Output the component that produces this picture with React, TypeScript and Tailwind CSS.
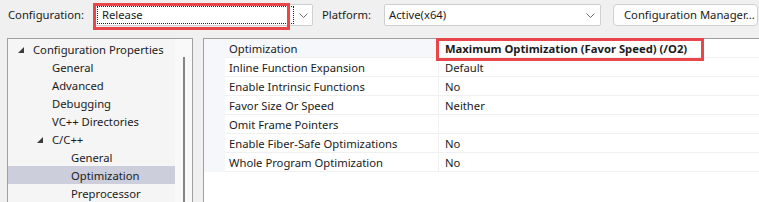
import React from "react";

const FONT = "font-['Segoe_UI','Noto_Sans',sans-serif]";

function Chevron() {
	return (
		<svg width="9" height="5" viewBox="0 0 9 5" className="shrink-0">
			<polyline
				points="0.5,0.5 4.5,4.5 8.5,0.5"
				fill="none"
				stroke="#6b6b6b"
				strokeWidth="1"
			/>
		</svg>
	);
}

function Expander() {
	return (
		<svg width="6" height="6" viewBox="0 0 6 6" className="shrink-0">
			<polygon points="6,0 6,6 0,6" fill="#3c3c3c" />
		</svg>
	);
}

const treeItems = [
	{ label: "Configuration Properties", level: 0, expanded: true },
	{ label: "General", level: 1 },
	{ label: "Advanced", level: 1 },
	{ label: "Debugging", level: 1 },
	{ label: "VC++ Directories", level: 1 },
	{ label: "C/C++", level: 1, expanded: true },
	{ label: "General", level: 2 },
	{ label: "Optimization", level: 2, selected: true },
	{ label: "Preprocessor", level: 2 },
];

const properties = [
	{ name: "Optimization", value: "Maximum Optimization (Favor Speed) (/O2)", bold: true },
	{ name: "Inline Function Expansion", value: "Default" },
	{ name: "Enable Intrinsic Functions", value: "No" },
	{ name: "Favor Size Or Speed", value: "Neither" },
	{ name: "Omit Frame Pointers", value: "" },
	{ name: "Enable Fiber-Safe Optimizations", value: "No" },
	{ name: "Whole Program Optimization", value: "No" },
];

export default function App() {
	return (
		<div
			className={`relative w-[759px] h-[202px] overflow-hidden bg-[#f0f0f0] text-[11.25px] text-[#1b1b1b] ${FONT}`}
		>
			{/* ツールバー */}
			<div className="flex items-start h-[38px] pt-[4px] pl-[8px]">
				<div className="flex items-center h-[22px] w-[87px] pt-[1px]">Configuration:</div>
				<div className="flex items-center h-[22px] w-[218px] bg-white border border-[#cfcfcf] rounded-[2px] pl-[1px] pr-[4px]">
					<div className="flex items-center h-[18px] w-[197px] border border-dotted border-[#222] pl-[4px] pt-[1px]">
						Release
					</div>
					<div className="flex-1 flex justify-end">
						<Chevron />
					</div>
				</div>
				<div className="flex items-center h-[22px] ml-[9px] w-[62px] pt-[1px]">Platform:</div>
				<div className="flex items-center justify-between h-[22px] w-[217px] bg-white border border-[#cfcfcf] rounded-[2px] pl-[4px] pr-[5px]">
					<span className="pt-[1px]">Active(x64)</span>
					<Chevron />
				</div>
				<button className="flex items-center h-[22px] w-[145px] ml-[12px] bg-[#fdfdfd] border border-[#d0d0d0] rounded-[4px] pl-[10px] pt-[1px] whitespace-nowrap">
					Configuration Manager...
				</button>
			</div>

			{/* 本体 */}
			<div className="flex pl-[7px]">
				{/* ツリー */}
				<div className="flex w-[186px] h-[170px] border border-[#a0a0a0] bg-[#f5f5f5]">
					<div className="flex-1 pt-[1px]">
						{treeItems.map((item, i) => (
							<div
								key={i}
								className={`flex items-center h-[18px] pt-[2px] ${item.selected ? "bg-[#cccedb]" : ""}`}
							>
								<div
									className={`flex items-center ${
										item.level === 0
											? "pl-[10px]"
											: item.level === 1
												? "pl-[29px]"
												: "pl-[48px]"
									}`}
								>
									<div className="w-[15px] flex">
										{item.expanded && <Expander />}
									</div>
									<span className="whitespace-nowrap">{item.label}</span>
								</div>
							</div>
						))}
					</div>
					<div className="w-[17px] bg-[#f9f9f9] flex justify-center pt-[18px]">
						<div className="w-[2px] h-full bg-[#858585]" />
					</div>
				</div>

				{/* プロパティグリッド */}
				<div className="ml-[10px] flex-1 h-[170px] border-l border-t border-[#a0a0a0] bg-white">
					<div className="flex">
						<div className="w-[21px] bg-[#f5f7fb]" />
						<div className="flex-1">
							{properties.map((p, i) => (
								<div
									key={i}
									className="flex h-[19px] border-b border-[#f0f0f0]"
								>
									<div
										className={`flex items-center w-[214px] pl-[4px] pt-[2px] border-r border-[#f0f0f0] whitespace-nowrap ${
											i === 0 ? "bg-[#f5f7fb]" : ""
										}`}
									>
										{p.name}
									</div>
									<div
										className={`flex items-center flex-1 pl-[6px] pt-[2px] whitespace-nowrap ${
											p.bold ? "font-bold" : ""
										}`}
									>
										{p.value}
									</div>
								</div>
							))}
						</div>
					</div>
				</div>
			</div>

			{/* 注釈の赤枠 */}
			<div className="absolute left-[93px] top-[3px] w-[197px] h-[27px] border-[3px] border-[#e9464c] pointer-events-none" />
			<div className="absolute left-[436px] top-[38px] w-[268px] h-[23px] border-[3px] border-[#e9464c] pointer-events-none" />
		</div>
	);
}
